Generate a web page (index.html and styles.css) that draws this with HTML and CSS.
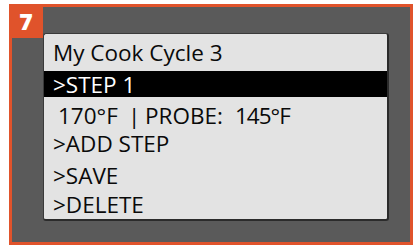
FILE: index.html
```html
<!DOCTYPE html>
<html>
<head>
<meta charset="utf-8">
<link rel="stylesheet" href="styles.css">
</head>
<body>
<div class="frame">
  <div class="badge">7</div>
  <div class="screen">
    <div class="row title">My Cook Cycle 3</div>
    <div class="row selected">&gt;STEP 1</div>
    <div class="row detail"><span class="temp">170°F</span><span class="sep">|</span><span class="probe">PROBE:</span><span class="ptemp">145°F</span></div>
    <div class="row add">&gt;ADD STEP</div>
    <div class="row save">&gt;SAVE</div>
    <div class="row delete">&gt;DELETE</div>
  </div>
</div>
</body>
</html>
```
FILE: styles.css
```css
html, body {
  margin: 0;
  padding: 0;
  background: #ffffff;
}
.frame {
  position: relative;
  box-sizing: border-box;
  margin: 4px 0 0 9px;
  width: 404px;
  height: 241px;
  border: 3px solid #e0532b;
  background: #5a5a5a;
  padding: 26px 0 0 31px;
}
.badge {
  position: absolute;
  left: -3px;
  top: -3px;
  width: 34px;
  height: 34px;
  background: #e0532b;
  color: #ffffff;
  font-family: "Open Sans", sans-serif;
  font-weight: 800;
  font-size: 23px;
  line-height: 34px;
  text-align: center;
}
.screen {
  box-sizing: border-box;
  width: 346px;
  height: 188px;
  background: #e3e3e3;
  border-top: 1px solid #3a3a3a;
  border-left: 1px solid #3a3a3a;
  border-right: 2px solid #2b2b2b;
  border-bottom: 2px solid #2b2b2b;
  border-radius: 3px;
  padding-top: 6px;
  font-family: "Open Sans", sans-serif;
  font-size: 22.5px;
  color: #0a0a0a;
  overflow: hidden;
}
.row {
  height: 26px;
  line-height: 26px;
  padding-left: 9px;
  white-space: nowrap;
}
.title { margin-bottom: 5px; }
.selected {
  background: #000000;
  color: #ffffff;
  line-height: 27px;
  margin-bottom: 6px;
}
.detail { padding-left: 14px; margin-bottom: 2px; }
.detail span { display: inline-block; }
.temp { width: 70px; }
.sep { width: 17px; }
.probe { width: 90px; }
.ptemp { letter-spacing: -1px; }
.add { margin-bottom: 6px; }
.save { margin-bottom: 3px; }
```
